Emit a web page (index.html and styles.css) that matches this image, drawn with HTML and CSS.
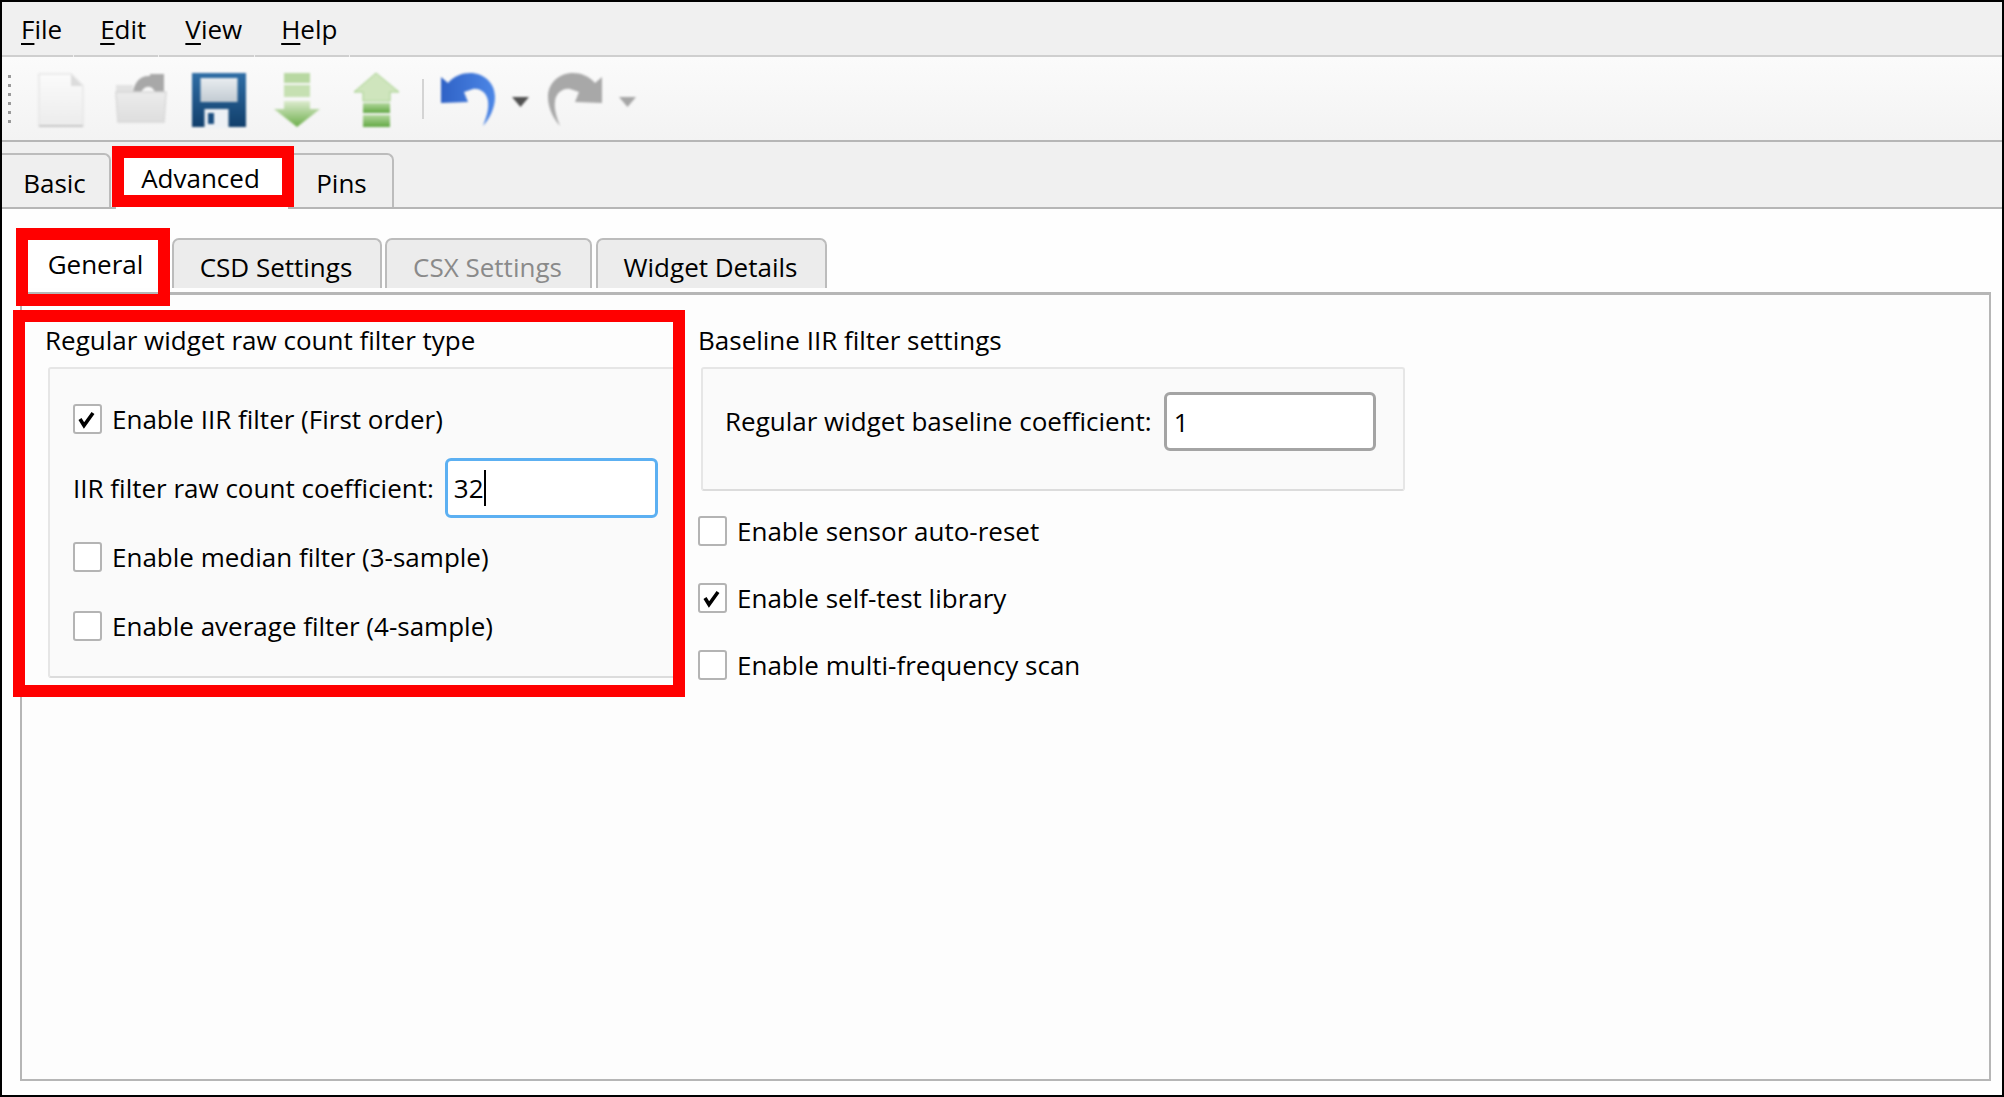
FILE: index.html
```html
<!DOCTYPE html>
<html lang="en">
<head>
    <meta charset="UTF-8">
    <meta name="viewport" content="width=device-width, initial-scale=1.0">
    <title>CapSense Configurator</title>
    <link rel="stylesheet" href="styles.css">
</head>
<body>
<div class="window">

    <!-- Menu -->
    <nav class="menu">
        <span class="menu-item menu-first"><u>F</u>ile</span>
        <span class="menu-item"><u>E</u>dit</span>
        <span class="menu-item"><u>V</u>iew</span>
        <span class="menu-item"><u>H</u>elp</span>
        <span class="menu-rest"></span>
    </nav>

    <!-- Toolbar -->
    <div class="toolbar">
        <span class="grip"></span>
        <span class="tool">
            <svg width="56" height="56" viewBox="0 0 56 56">
                <defs>
                    <linearGradient id="paper" x1="0" y1="0" x2="0" y2="1">
                        <stop offset="0" stop-color="#fbfbfb"/>
                        <stop offset="1" stop-color="#ececec"/>
                    </linearGradient>
                    <linearGradient id="folder" x1="0" y1="0" x2="0" y2="1">
                        <stop offset="0" stop-color="#ececec"/>
                        <stop offset="1" stop-color="#dedede"/>
                    </linearGradient>
                    <linearGradient id="greenDown" x1="0" y1="0" x2="0" y2="1">
                        <stop offset="0" stop-color="#dcebce"/>
                        <stop offset="1" stop-color="#6cae4a"/>
                    </linearGradient>
                    <linearGradient id="greenBar" x1="0" y1="0" x2="0" y2="1">
                        <stop offset="0" stop-color="#b4d89e"/>
                        <stop offset="1" stop-color="#62a844"/>
                    </linearGradient>
                    <linearGradient id="saveBody" x1="0" y1="0" x2="0" y2="1">
                        <stop offset="0" stop-color="#2f6ea6"/>
                        <stop offset="1" stop-color="#123f6b"/>
                    </linearGradient>
                    <linearGradient id="saveLabel" x1="0" y1="0" x2="0" y2="1">
                        <stop offset="0" stop-color="#e9edf0"/>
                        <stop offset="1" stop-color="#c2cbd2"/>
                    </linearGradient>
                    <linearGradient id="undoBlue" x1="0" y1="0" x2="1" y2="0">
                        <stop offset="0" stop-color="#2f62c6"/>
                        <stop offset="1" stop-color="#4c86e6"/>
                    </linearGradient>
                </defs>
                <path d="M6 2H38L50 14V54H6Z" fill="url(#paper)" stroke="#e6e6e6" stroke-width="1.5"/>
                <path d="M38 2V14H50Z" fill="#dcdcdc"/>
                <path d="M6 54H50" stroke="#c8c8c8" stroke-width="2"/>
            </svg>
        </span>
        <span class="tool">
            <svg width="56" height="56" viewBox="0 0 56 56">
                <path d="M4 20V13H21V20Z" fill="#e2e2e2"/>
                <path d="M21 20C23 8 30 3 38 4V2H52V20H43C40 13 33 13 29 20Z" fill="#a8a8a8"/>
                <path d="M4 20H54L52 50H6Z" fill="url(#folder)" stroke="#d8d8d8" stroke-width="1.5"/>
            </svg>
        </span>
        <span class="tool">
            <svg width="56" height="56" viewBox="0 0 56 56">
                <rect x="1" y="1" width="54" height="54" fill="url(#saveBody)"/>
                <rect x="9.5" y="6" width="37" height="24" fill="url(#saveLabel)"/>
                <rect x="13.5" y="37" width="24" height="19" fill="#eef1f5"/>
                <rect x="17" y="41" width="6" height="11" fill="#1d4f80"/>
            </svg>
        </span>
        <span class="tool">
            <svg width="56" height="56" viewBox="0 0 56 56">
                <rect x="14" y="1" width="26" height="10" fill="#b8d8a2"/>
                <rect x="14" y="13" width="26" height="12" fill="#c6e0b2"/>
                <path d="M14 29H40V37H50L27 55L4 37H14Z" fill="url(#greenDown)"/>
            </svg>
        </span>
        <span class="tool">
            <svg width="56" height="56" viewBox="0 0 56 56">
                <path d="M27 1L50 20H41V29H14V20H5Z" fill="#cfe5bd" stroke="#a4cf8a" stroke-width="1"/>
                <rect x="14" y="31" width="27" height="10" fill="url(#greenBar)"/>
                <rect x="14" y="43" width="27" height="12" fill="url(#greenBar)"/>
            </svg>
        </span>
        <span class="tool-sep"></span>
        <svg class="tool-undo" width="56" height="56" viewBox="0 0 56 56">
            <path d="M1 5L8 11C14 4 22 1 30 1C44 1 55 11 55 25C55 37 49 47 43 54C47 44 49 36 48 29C47 21 40 16 33 17C30 18 27 19 24 20L28 30L1 31Z" fill="url(#undoBlue)"/>
        </svg>
        <svg class="tool-drop" width="17" height="10" viewBox="0 0 17 10"><path d="M0 0H17L8.5 10Z" fill="#505050"/></svg>
        <svg class="tool-redo" width="56" height="56" viewBox="0 0 56 56">
            <path transform="translate(56 0) scale(-1 1)" d="M1 5L8 11C14 4 22 1 30 1C44 1 55 11 55 25C55 37 49 47 43 54C47 44 49 36 48 29C47 21 40 16 33 17C30 18 27 19 24 20L28 30L1 31Z" fill="#a8a8a8"/>
        </svg>
        <svg class="tool-drop" width="17" height="10" viewBox="0 0 17 10"><path d="M0 0H17L8.5 10Z" fill="#a6a6a6"/></svg>
    </div>

    <!-- Tabs utama -->
    <div class="tabs">
        <span class="tab tab-basic">Basic</span>
        <span class="tab tab-advanced">Advanced</span>
        <span class="tab tab-pins">Pins</span>
    </div>

    <div class="content">
        <div class="sub-tabs">
            <span class="sub-tab sub-general">General</span>
            <span class="sub-tab sub-csd">CSD Settings</span>
            <span class="sub-tab sub-csx">CSX Settings</span>
            <span class="sub-tab sub-widget">Widget Details</span>
        </div>

        <div class="pane">
            <section class="col-left">
                <div class="group-title">Regular widget raw count filter type</div>
                <div class="group group-filter">
                    <div class="row">
                        <span class="check">
                            <svg width="25" height="26" viewBox="0 0 25 26"><path d="M5 13L9 19.5L18 7" fill="none" stroke="#000" stroke-width="3.6"/></svg>
                        </span>
                        <span class="check-label">Enable IIR filter (First order)</span>
                    </div>
                    <div class="row">
                        <span>IIR filter raw count coefficient:</span>
                        <span class="field field-focus">32<i class="caret"></i></span>
                    </div>
                    <div class="row">
                        <span class="check"></span>
                        <span class="check-label">Enable median filter (3-sample)</span>
                    </div>
                    <div class="row">
                        <span class="check"></span>
                        <span class="check-label">Enable average filter (4-sample)</span>
                    </div>
                </div>
            </section>

            <section class="col-right">
                <div class="group-title">Baseline IIR filter settings</div>
                <div class="group group-baseline">
                    <span>Regular widget baseline coefficient:</span>
                    <span class="field">1</span>
                </div>
                <div class="options">
                    <div class="option">
                        <span class="check"></span>
                        <span class="check-label">Enable sensor auto-reset</span>
                    </div>
                    <div class="option">
                        <span class="check">
                            <svg width="25" height="26" viewBox="0 0 25 26"><path d="M5 13L9 19.5L18 7" fill="none" stroke="#000" stroke-width="3.6"/></svg>
                        </span>
                        <span class="check-label">Enable self-test library</span>
                    </div>
                    <div class="option">
                        <span class="check"></span>
                        <span class="check-label">Enable multi-frequency scan</span>
                    </div>
                </div>
            </section>
        </div>
    </div>

    <!-- Kotak merah penanda -->
    <div class="mark mark-advanced"></div>
    <div class="mark mark-general"></div>
    <div class="mark mark-filter"></div>
</div>
</body>
</html>
```

FILE: styles.css
```css
* {
    box-sizing: border-box;
}
body {
    margin: 0;
    font-family: "Open Sans", Arial, sans-serif;
    font-size: 26px;
    color: #000;
}
.window {
    position: relative;
    width: 2004px;
    height: 1097px;
    border: 2px solid #000;
    background-color: #fefefe;
    display: flex;
    flex-direction: column;
    overflow: hidden;
}

/* Menu */
.menu {
    display: flex;
    height: 55px;
    background-color: #f0f0f0;
}
.menu-item {
    display: flex;
    align-items: center;
    padding: 0 12px 0 26px;
    margin-right: 1px;
    border-bottom: 2px solid #cfcfcf;
}
.menu-first {
    padding: 0 11px 0 19px;
}
.menu-rest {
    flex: 1;
    border-bottom: 2px solid #cfcfcf;
}
.menu u {
    text-decoration-thickness: 2px;
    text-underline-offset: 4px;
}

/* Toolbar */
.toolbar {
    display: flex;
    align-items: center;
    height: 85px;
    padding: 3px 0 0 6px;
    background: linear-gradient(#fbfbfb, #f3f3f3);
    border-bottom: 2px solid #b6b6b6;
}
.toolbar svg {
    filter: blur(0.8px);
    flex: none;
}
.grip {
    width: 3px;
    height: 50px;
    margin-right: 10px;
    background: repeating-linear-gradient(#9a9a9a 0 3px, transparent 3px 9px);
}
.tool {
    display: flex;
    justify-content: center;
    width: 79px;
}
.tool-sep {
    width: 2px;
    height: 40px;
    margin: 0 0 3px 6px;
    background-color: #d4d4d4;
}
.tool-undo {
    margin-left: 16px;
}
.tool-drop {
    margin-left: 16px;
    margin-top: 4px;
}
.tool-redo {
    margin-left: 18px;
}

/* Tabs */
.tabs {
    display: flex;
    align-items: flex-end;
    height: 67px;
    background-color: #f0f0f0;
    border-bottom: 2px solid #b6b6b6;
}
.tab {
    display: flex;
    align-items: center;
    justify-content: center;
    height: 54px;
    padding-top: 4px;
    background-color: #efefef;
    border: 2px solid #bcbcbc;
    border-bottom: none;
    border-left: none;
    border-radius: 0 7px 0 0;
}
.tab-basic {
    width: 109px;
    margin-right: 5px;
    padding-right: 2px;
}
.tab-advanced {
    width: 172px;
    height: 63px;
    margin-bottom: -2px;
    padding: 0 3px 0 0;
    background-color: #fff;
    border: none;
}
.tab-pins {
    width: 106px;
    padding-left: 3px;
}

/* Sub tabs */
.content {
    flex: 1;
    display: flex;
    flex-direction: column;
    padding: 29px 11px 14px 18px;
}
.sub-tabs {
    display: flex;
    height: 54px;
    flex: none;
}
.sub-tab {
    display: flex;
    align-items: center;
    justify-content: center;
    height: 50px;
    padding: 5px 2px 0 0;
    background-color: #ececec;
    border: 2px solid #bcbcbc;
    border-bottom: none;
    border-radius: 7px 7px 0 0;
}
.sub-general {
    width: 151px;
    padding: 2px 0 0 0;
    background-color: #fff;
    border: none;
    margin-right: 1px;
}
.sub-csd {
    width: 210px;
    margin-right: 3px;
}
.sub-csx {
    width: 207px;
    margin-right: 4px;
    color: #8a8a8a;
}
.sub-widget {
    width: 231px;
}
.pane {
    flex: 1;
    display: flex;
    padding: 28px 0 0 23px;
    background-color: #fdfdfd;
    border: 2px solid #b6b6b6;
    border-top-width: 3px;
}

/* Isi pane */
.col-left {
    width: 653px;
}
.group-title {
    height: 34px;
    line-height: 34px;
    margin-bottom: 10px;
}
.group {
    margin-left: 3px;
    background-color: #fafafa;
    border: 2px solid #e6e6e6;
    border-bottom-color: #dcdcdc;
    border-radius: 3px;
}
.group-filter {
    display: flex;
    flex-direction: column;
    gap: 9px;
    width: 632px;
    height: 311px;
    padding: 20px 0 0 23px;
}
.row {
    display: flex;
    align-items: center;
    height: 60px;
}
.group-baseline {
    display: flex;
    align-items: flex-start;
    gap: 12px;
    width: 704px;
    height: 124px;
    padding: 23px 0 0 22px;
}
.group-baseline > span:first-child {
    line-height: 59px;
}
.field {
    position: relative;
    display: flex;
    align-items: center;
    width: 212px;
    height: 59px;
    padding-left: 7px;
    background-color: #fff;
    border: 3px solid #a4a4a4;
    border-radius: 6px;
}
.field-focus {
    width: 213px;
    height: 60px;
    margin-left: 11px;
    padding-left: 6px;
    border-color: #5cb0f2;
}
.caret {
    width: 2px;
    height: 36px;
    background-color: #000;
}
.check {
    flex: none;
    width: 29px;
    height: 30px;
    background-color: #fff;
    border: 2px solid #b4b4b4;
    border-radius: 3px;
}
.check svg {
    display: block;
}
.check-label {
    margin-left: 10px;
}
.options {
    display: flex;
    flex-direction: column;
    gap: 37px;
    margin-top: 25px;
}
.option {
    display: flex;
    align-items: center;
    height: 30px;
}

/* Kotak merah */
.mark {
    position: absolute;
    border: 12px solid #f00;
}
.mark-advanced {
    left: 110px;
    top: 144px;
    width: 182px;
    height: 61px;
}
.mark-general {
    left: 14px;
    top: 226px;
    width: 154px;
    height: 78px;
}
.mark-filter {
    left: 11px;
    top: 308px;
    width: 672px;
    height: 387px;
}
```
